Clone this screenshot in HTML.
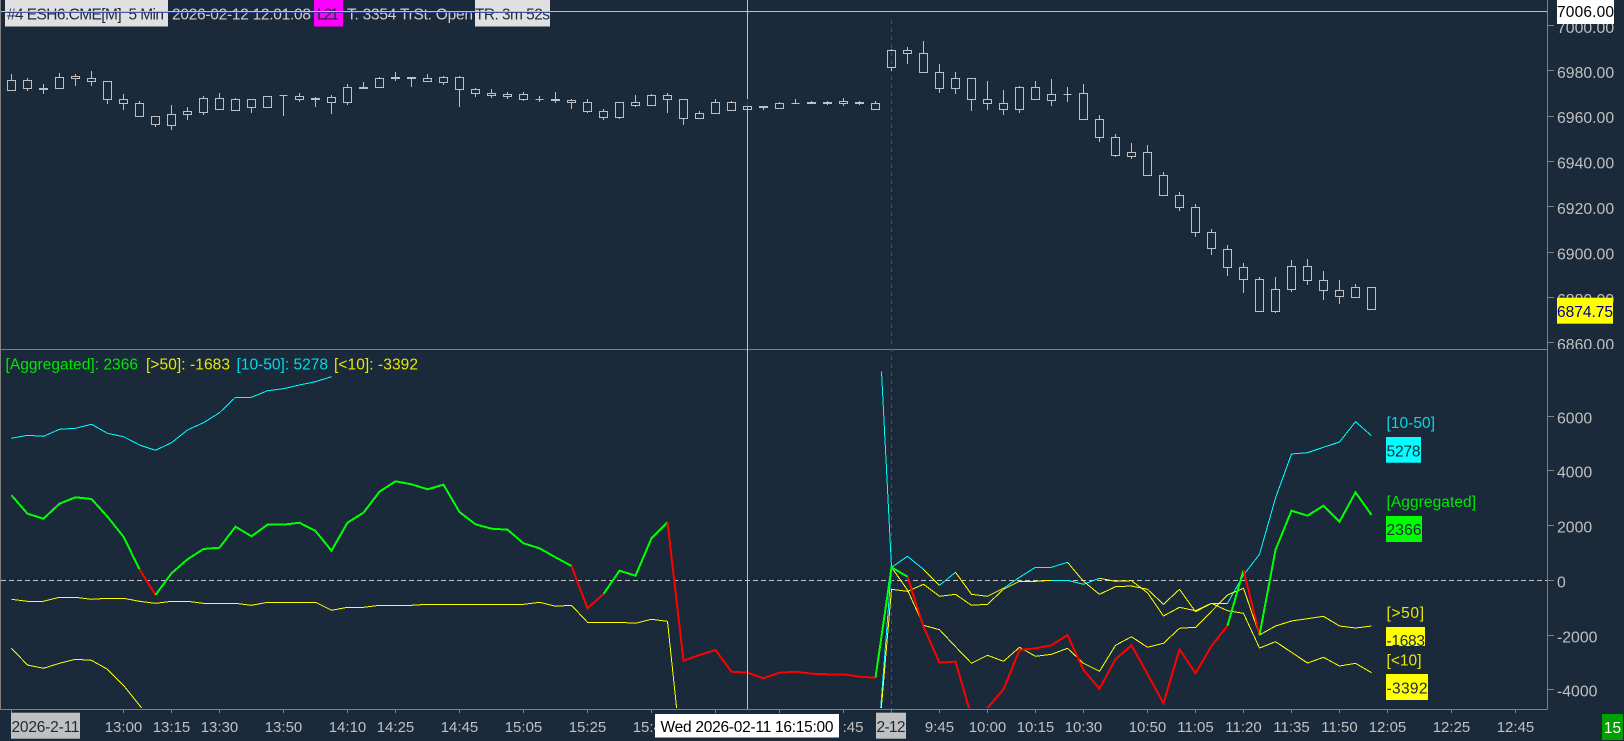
<!DOCTYPE html>
<html>
<head>
<meta charset="utf-8">
<style>
html,body{margin:0;padding:0;background:#1a2a3a;width:1624px;height:741px;overflow:hidden}
svg{display:block;position:absolute;left:0;top:0}
text{font-family:"Liberation Sans",sans-serif;font-size:15.5px;white-space:pre}
.ax text{fill:#c0c0c0;font-size:15.8px}
.tm text{fill:#c0c0c0;font-size:15px;text-anchor:middle}
.l{fill:none;stroke-width:1;shape-rendering:crispEdges}
.t{fill:none;stroke-width:2;shape-rendering:crispEdges}
</style>
</head>
<body>
<svg width="1624" height="741" viewBox="0 0 1624 741" xmlns="http://www.w3.org/2000/svg">
<defs>
<clipPath id="lp"><rect x="1" y="350" width="1546" height="358"/></clipPath>
<clipPath id="ap"><rect x="1550" y="0" width="74" height="349"/></clipPath>
</defs>
<rect width="1624" height="741" fill="#1a2a3a"/>

<!-- header -->
<rect x="5" y="0" width="163" height="26.5" fill="#e0e0e0"/>
<rect x="314" y="0" width="29" height="26.5" fill="#ff00ff"/>
<rect x="475" y="0" width="75" height="26.5" fill="#e0e0e0"/>
<text x="7" y="19.5" fill="#1a2a3a" textLength="157" lengthAdjust="spacing">#4 ESH6.CME[M]  5 Min</text>
<text x="172" y="19.5" fill="#d0d0d0" textLength="139" lengthAdjust="spacing">2026-02-12 12:01:08</text>
<text x="317" y="19.5" fill="#1a2a3a" textLength="22" lengthAdjust="spacing">L21</text>
<text x="347" y="19.5" fill="#d0d0d0" textLength="126" lengthAdjust="spacing">T: 3354 TrSt: Open</text>
<text x="475" y="19.5" fill="#1a2a3a" textLength="75" lengthAdjust="spacing">TR: 3m 52s</text>

<!-- axes -->
<g stroke="#808080" stroke-width="1" shape-rendering="crispEdges" fill="none">
<path d="M0.5 0V709"/>
<path d="M1547.5 0V709.5"/>
<path d="M0 349.5H1547.5"/>
<path d="M0 709.5H1547.5"/>
<path d="M1548 25.5H1554M1548 70.5H1554M1548 116.5H1554M1548 161.5H1554M1548 206.5H1554M1548 252.5H1554M1548 297.5H1554M1548 342.5H1554M1548 416.5H1554M1548 470.5H1554M1548 525.5H1554M1548 580.5H1554M1548 635.5H1554M1548 689.5H1554"/>
<path d="M11.5 710V713M123.5 710V713M171.5 710V713M219.5 710V713M283.5 710V713M347.5 710V713M395.5 710V713M459.5 710V713M523.5 710V713M587.5 710V713M651.5 710V713M715.5 710V713M779.5 710V713M843.5 710V713M891.5 710V713M939.5 710V713M987.5 710V713M1035.5 710V713M1083.5 710V713M1147.5 710V713M1195.5 710V713M1243.5 710V713M1291.5 710V713M1339.5 710V713M1387.5 710V713M1451.5 710V713M1515.5 710V713"/>
</g>

<!-- zero line, session dashed line -->
<path d="M1 580.5H1547" stroke="#c8c8c8" stroke-width="1" stroke-dasharray="5 3" shape-rendering="crispEdges" fill="none"/>
<path d="M891.5 20V709" stroke="#3a4a8c" stroke-width="1" stroke-dasharray="4 4" shape-rendering="crispEdges" fill="none"/>

<!-- candles -->
<path fill="none" stroke="#c0c0c0" stroke-width="1" shape-rendering="crispEdges" d="
M11.5 74V80.5M7.5 80.5H15.5V90.5H7.5Z
M27.5 78V80.5M27.5 88.5V91M23.5 80.5H31.5V88.5H23.5Z
M43.5 84V88.5M43.5 89.5V94M39.5 88.5H47.5V89.5H39.5Z
M59.5 73V77.5M55.5 77.5H63.5V88.5H55.5Z
M75.5 74V76.5M75.5 78.5V86M71.5 76.5H79.5V78.5H71.5Z
M91.5 71V78.5M91.5 81.5V86M87.5 78.5H95.5V81.5H87.5Z
M107.5 99.5V104M103.5 81.5H111.5V99.5H103.5Z
M123.5 94V99.5M123.5 103.5V110M119.5 99.5H127.5V103.5H119.5Z
M139.5 101V103.5M135.5 103.5H143.5V116.5H135.5Z
M155.5 124.5V127M151.5 116.5H159.5V124.5H151.5Z
M171.5 105V114.5M171.5 125.5V130M167.5 114.5H175.5V125.5H167.5Z
M187.5 107V111.5M187.5 114.5V120M183.5 111.5H191.5V114.5H183.5Z
M203.5 96V98.5M203.5 112.5V115M199.5 98.5H207.5V112.5H199.5Z
M219.5 93V98.5M215.5 98.5H223.5V109.5H215.5Z
M235.5 98V99.5M231.5 99.5H239.5V110.5H231.5Z
M251.5 107.5V113M247.5 99.5H255.5V107.5H247.5Z
M263.5 96.5H271.5V107.5H263.5Z
M283.5 95.5V116M279.5 95.5H287.5
M299.5 93V96.5M299.5 99.5V102M295.5 96.5H303.5V99.5H295.5Z
M315.5 97V98.5M315.5 99.5V107M311.5 98.5H319.5V99.5H311.5Z
M331.5 95V97.5M331.5 102.5V114M327.5 97.5H335.5V102.5H327.5Z
M347.5 84V87.5M347.5 102.5V105M343.5 87.5H351.5V102.5H343.5Z
M363.5 82V87.5M359.5 87.5H367.5V88.5H359.5Z
M379.5 77V78.5M375.5 78.5H383.5V87.5H375.5Z
M395.5 72V77.5M395.5 78.5V81M391.5 77.5H399.5V78.5H391.5Z
M411.5 78.5V87M407.5 77.5H415.5V78.5H407.5Z
M427.5 74V78.5M423.5 78.5H431.5V81.5H423.5Z
M443.5 76V77.5M443.5 82.5V85M439.5 77.5H447.5V82.5H439.5Z
M459.5 76V77.5M459.5 89.5V107M455.5 77.5H463.5V89.5H455.5Z
M475.5 88V89.5M475.5 93.5V97M471.5 89.5H479.5V93.5H471.5Z
M491.5 89V93.5M491.5 95.5V98M487.5 93.5H495.5V95.5H487.5Z
M507.5 92V94.5M507.5 96.5V99M503.5 94.5H511.5V96.5H503.5Z
M523.5 92V94.5M523.5 99.5V101M519.5 94.5H527.5V99.5H519.5Z
M539.5 96V102M535.5 99.5H543.5
M555.5 92V99.5M555.5 100.5V103M551.5 99.5H559.5V100.5H551.5Z
M571.5 99V100.5M571.5 102.5V109M567.5 100.5H575.5V102.5H567.5Z
M587.5 99V102.5M587.5 111.5V113M583.5 102.5H591.5V111.5H583.5Z
M603.5 109V111.5M603.5 117.5V120M599.5 111.5H607.5V117.5H599.5Z
M619.5 117.5V119M615.5 102.5H623.5V117.5H615.5Z
M635.5 95V102.5M635.5 105.5V107M631.5 102.5H639.5V105.5H631.5Z
M651.5 94V95.5M647.5 95.5H655.5V105.5H647.5Z
M667.5 93V95.5M667.5 99.5V113M663.5 95.5H671.5V99.5H663.5Z
M683.5 118.5V125M679.5 99.5H687.5V118.5H679.5Z
M699.5 111V113.5M695.5 113.5H703.5V118.5H695.5Z
M715.5 99V102.5M711.5 102.5H719.5V113.5H711.5Z
M731.5 101V102.5M727.5 102.5H735.5V110.5H727.5Z
M747.5 99V106.5M743.5 106.5H751.5V109.5H743.5Z
M763.5 107.5V110M759.5 106.5H767.5V107.5H759.5Z
M779.5 102V103.5M775.5 103.5H783.5V108.5H775.5Z
M795.5 99V103.5M791.5 103.5H799.5
M811.5 101V102.5M811.5 103.5V104M807.5 102.5H815.5V103.5H807.5Z
M827.5 101V102.5M827.5 103.5V105M823.5 102.5H831.5V103.5H823.5Z
M843.5 98V101.5M843.5 103.5V106M839.5 101.5H847.5V103.5H839.5Z
M859.5 101V102.5M859.5 103.5V105M855.5 102.5H863.5V103.5H855.5Z
M875.5 101V103.5M871.5 103.5H879.5V109.5H871.5Z
M891.5 49V50.5M891.5 67.5V71M887.5 50.5H895.5V67.5H887.5Z
M907.5 47V50.5M907.5 53.5V64M903.5 50.5H911.5V53.5H903.5Z
M923.5 41V53.5M919.5 53.5H927.5V72.5H919.5Z
M939.5 64V72.5M939.5 88.5V93M935.5 72.5H943.5V88.5H935.5Z
M955.5 72V78.5M955.5 88.5V94M951.5 78.5H959.5V88.5H951.5Z
M971.5 99.5V111M967.5 78.5H975.5V99.5H967.5Z
M987.5 81V99.5M987.5 103.5V110M983.5 99.5H991.5V103.5H983.5Z
M1003.5 90V103.5M1003.5 109.5V115M999.5 103.5H1007.5V109.5H999.5Z
M1019.5 86V87.5M1019.5 109.5V113M1015.5 87.5H1023.5V109.5H1015.5Z
M1035.5 81V87.5M1031.5 87.5H1039.5V99.5H1031.5Z
M1051.5 79V94.5M1051.5 100.5V106M1047.5 94.5H1055.5V100.5H1047.5Z
M1067.5 87V102M1063.5 94.5H1071.5
M1083.5 84V93.5M1079.5 93.5H1087.5V119.5H1079.5Z
M1099.5 115V119.5M1099.5 137.5V142M1095.5 119.5H1103.5V137.5H1095.5Z
M1115.5 134V137.5M1115.5 155.5V157M1111.5 137.5H1119.5V155.5H1111.5Z
M1131.5 143V152.5M1131.5 156.5V159M1127.5 152.5H1135.5V156.5H1127.5Z
M1147.5 145V152.5M1143.5 152.5H1151.5V175.5H1143.5Z
M1163.5 172V175.5M1159.5 175.5H1167.5V195.5H1159.5Z
M1179.5 192V195.5M1179.5 207.5V211M1175.5 195.5H1183.5V207.5H1175.5Z
M1195.5 204V207.5M1195.5 232.5V237M1191.5 207.5H1199.5V232.5H1191.5Z
M1211.5 229V232.5M1211.5 248.5V255M1207.5 232.5H1215.5V248.5H1207.5Z
M1227.5 245V249.5M1227.5 267.5V276M1223.5 249.5H1231.5V267.5H1223.5Z
M1243.5 263V267.5M1243.5 279.5V293M1239.5 267.5H1247.5V279.5H1239.5Z
M1259.5 277V279.5M1255.5 279.5H1263.5V311.5H1255.5Z
M1275.5 277V289.5M1275.5 311.5V313M1271.5 289.5H1279.5V311.5H1271.5Z
M1291.5 260V266.5M1291.5 289.5V292M1287.5 266.5H1295.5V289.5H1287.5Z
M1307.5 259V266.5M1307.5 280.5V285M1303.5 266.5H1311.5V280.5H1303.5Z
M1323.5 271V280.5M1323.5 290.5V300M1319.5 280.5H1327.5V290.5H1319.5Z
M1339.5 280V290.5M1339.5 296.5V304M1335.5 290.5H1343.5V296.5H1335.5Z
M1355.5 284V287.5M1351.5 287.5H1359.5V297.5H1351.5Z
M1367.5 287.5H1375.5V309.5H1367.5Z"/>

<!-- indicator lines -->
<g clip-path="url(#lp)">
<g class="l" stroke="#00ffff" fill="none">
<polyline class="l" stroke="#00ffff" points="11.5,438.3 27.5,435.3 43.5,436.3 59.5,429.3 75.5,428.3 91.5,424.3 107.5,433.3 123.5,436.7 139.5,445 155.5,450.3 171.5,442.7 187.5,430 203.5,422.7 219.5,412.7 235.5,397.3 251.5,397.3 267.5,390.7 283.5,388.7 299.5,385 315.5,381.7 331.5,376.7"/>
<polyline class="l" stroke="#00ffff" points="881.5,371.5 891.5,567.3"/>
<polyline class="l" stroke="#00ffff" points="880.7,708 891.5,567.3 907.5,556.3 923.5,569.3"/>
<polyline class="l" stroke="#00ffff" points="939.5,585.3 955.5,572.3"/>
<polyline class="l" stroke="#00ffff" points="1003.5,588.3 1019.5,577.3 1035.5,567.3 1051.5,567.3 1067.5,562.3"/>
<polyline class="l" stroke="#00ffff" points="1051.5,580.3 1067.5,580.3 1083.5,584.3 1099.5,578.3"/>
<polyline class="l" stroke="#00ffff" points="1227.5,603.3 1243.5,575 1259.5,554.3 1275.5,498 1291.5,454 1307.5,452.7 1323.5,447.3 1339.5,442 1355.5,421.7 1371.5,435.7"/>
</g>
<g>
<polyline class="l" stroke="#ffff00" points="11.5,599.3 27.5,601.3 43.5,601.3 59.5,597.3 75.5,597.3 91.5,599.3 107.5,598.3 123.5,598.3 139.5,601.3 155.5,603.3 171.5,601.3 187.5,601.3 203.5,603.3 219.5,603.3 235.5,603.3 251.5,605.3 267.5,602.3 283.5,602.3 299.5,602.3 315.5,602.3 331.5,610.3 347.5,607.3 363.5,607.3 379.5,605.3 395.5,605.3 411.5,605.3 427.5,604.3 443.5,604.3 459.5,604.3 475.5,604.3 491.5,604.3 507.5,604.3 523.5,604.3 539.5,602.3 555.5,606.3 571.5,605.3 587.5,622.3 603.5,622.3 619.5,622.3 635.5,623.3 651.5,619.3 667.5,621.3 676.6,708"/>
<polyline class="l" stroke="#ffff00" points="11.5,648.3 27.5,665 43.5,668.3 59.5,663.3 75.5,659.3 91.5,660.3 107.5,669.3 123.5,685.3 139.5,705.3 141.6,708"/>
<polyline class="l" stroke="#ffff00" points="881.3,708 891.5,589.3 907.5,591.3 923.5,584.3 939.5,596.3 955.5,594.3 971.5,605.3 987.5,604.3 1003.5,589.3 1019.5,581.3 1035.5,581.3 1051.5,580.3"/>
<polyline class="l" stroke="#ffff00" points="1099.5,578.3 1115.5,581.3 1131.5,580.7 1147.5,592.7 1163.5,616 1179.5,607.3 1195.5,610.7 1211.5,603.3 1227.5,610.7 1243.5,613.3 1259.5,648 1275.5,641.7 1291.5,652.3 1307.5,663 1323.5,657.3 1339.5,666 1355.5,663.3 1371.5,672.7"/>
<polyline class="l" stroke="#ffff00" points="891.5,567.3 907.5,590 923.5,625.3 939.5,629.7 955.5,646.7 971.5,663.3 987.5,655.3 1003.5,661.3 1019.5,647.3 1035.5,656.3 1051.5,654.3 1067.5,648.3 1083.5,663.3 1099.5,671.3 1115.5,645.3 1131.5,636.7 1147.5,647.3 1163.5,643.3 1179.5,628.3 1195.5,627.3 1211.5,611.3 1227.5,595 1243.5,588.3 1259.5,635 1275.5,626 1291.5,621 1307.5,618.7 1323.5,616.3 1339.5,626 1355.5,628 1371.5,626"/>
<polyline class="l" stroke="#ffff00" points="923.5,569.3 939.5,585.3"/>
<polyline class="l" stroke="#ffff00" points="955.5,572.3 971.5,594.3 987.5,596.3 1003.5,588.3"/>
<polyline class="l" stroke="#ffff00" points="1067.5,562.3 1083.5,581.3 1099.5,594.3 1115.5,586.7 1131.5,586 1147.5,589.3 1163.5,604.3 1179.5,589.3 1195.5,611.7 1211.5,603.3 1227.5,603.3"/>
</g>
<g>
<polyline class="t" stroke="#00ff00" points="11.5,495.3 27.5,513.7 43.5,518.7 59.5,503.7 75.5,497.3 91.5,499 107.5,516.7 123.5,536.7 139.5,569.3"/>
<polyline class="t" stroke="#ff0000" points="139.5,569.3 155.5,595"/>
<polyline class="t" stroke="#00ff00" points="155.5,595 171.5,573.3 187.5,559.3 203.5,549 219.5,547.7 235.5,526.7 251.5,536.3 267.5,524.7 283.5,524.7 299.5,522.7 315.5,531 331.5,550.7 347.5,522.7 363.5,512.7 379.5,491.7 395.5,481.3 411.5,484.3 427.5,489.3 443.5,484.7 459.5,512 475.5,524.3 491.5,528.7 507.5,529.7 523.5,543.3 539.5,548.3 555.5,557.3 571.5,566"/>
<polyline class="t" stroke="#ff0000" points="571.5,566 587.5,608.3 603.5,594"/>
<polyline class="t" stroke="#00ff00" points="603.5,594 619.5,570.7 635.5,575.7 651.5,538.3 667.5,522.3"/>
<polyline class="t" stroke="#ff0000" points="667.5,522.3 683.5,660.7 699.5,655 715.5,650 731.5,671.7 747.5,672.7 763.5,678.3 779.5,672.7 795.5,671.7 811.5,673.7 827.5,674.3 843.5,674.3 859.5,676.7 875.5,677.7"/>
<polyline class="t" stroke="#00ff00" points="875.5,677.7 891.5,567.3 907.5,576.7"/>
<polyline class="t" stroke="#ff0000" points="907.5,576.7 923.5,626.7 939.5,662.7 955.5,661.7 971.5,716.7 987.5,708 1003.5,689.3 1019.5,650 1035.5,648.3 1051.5,645.3 1067.5,635 1083.5,670 1099.5,688.7 1115.5,659.3 1131.5,645.3 1147.5,674 1163.5,703.3 1179.5,649.3 1195.5,673.3 1211.5,646 1227.5,625.7"/>
<polyline class="t" stroke="#00ff00" points="1227.5,625.7 1243.5,570"/>
<polyline class="t" stroke="#ff0000" points="1243.5,570 1259.5,635"/>
<polyline class="t" stroke="#00ff00" points="1259.5,635 1275.5,550 1291.5,510.7 1307.5,515.7 1323.5,505.7 1339.5,521.7 1355.5,492.3 1371.5,515"/>
</g>
</g>

<!-- cursor -->
<path d="M747.5 0V709" stroke="#d4d42c" stroke-width="1" shape-rendering="crispEdges"/>
<path d="M747.5 99V106" stroke="#2030c0" stroke-width="1" shape-rendering="crispEdges"/>
<path d="M1 11.5H1547" stroke="#d4d42c" stroke-width="1" shape-rendering="crispEdges"/>
<path d="M5 12.5H550" stroke="#2a3aa0" stroke-width="1" shape-rendering="crispEdges" opacity=".8"/>

<!-- legend -->
<text x="5.5" y="369.5" fill="#00e800" textLength="132.5" lengthAdjust="spacing">[Aggregated]: 2366</text>
<text x="146" y="369.5" fill="#e8e800" textLength="84" lengthAdjust="spacing">[&gt;50]: -1683</text>
<text x="236.5" y="369.5" fill="#00dce8" textLength="91.5" lengthAdjust="spacing">[10-50]: 5278</text>
<text x="334" y="369.5" fill="#e8e800" textLength="84" lengthAdjust="spacing">[&lt;10]: -3392</text>

<!-- price axis labels -->
<g class="ax" clip-path="url(#ap)">
<text x="1557" y="33">7000.00</text>
<text x="1557" y="78">6980.00</text>
<text x="1557" y="123">6960.00</text>
<text x="1557" y="168.7">6940.00</text>
<text x="1557" y="214">6920.00</text>
<text x="1557" y="259.7">6900.00</text>
<text x="1557" y="304.8">6880.00</text>
<text x="1557" y="350">6860.00</text>
</g>
<g class="ax">
<text x="1557" y="423.7">6000</text>
<text x="1557" y="477.3">4000</text>
<text x="1557" y="532.7">2000</text>
<text x="1557" y="587.3">0</text>
<text x="1557" y="642.7">-2000</text>
<text x="1557" y="696.7">-4000</text>
</g>
<rect x="1557" y="0" width="57" height="24" fill="#ffffff"/>
<text x="1557" y="17.2" fill="#000000" textLength="57" lengthAdjust="spacing">7006.00</text>
<rect x="1557" y="297.7" width="56" height="26" fill="#ffff00"/>
<text x="1557" y="317" fill="#000080" textLength="56" lengthAdjust="spacing">6874.75</text>

<!-- right labels -->
<text x="1386.5" y="428" fill="#00dce8" textLength="48.5" lengthAdjust="spacing">[10-50]</text>
<rect x="1386" y="437" width="35" height="25.7" fill="#00ffff"/>
<text x="1386.5" y="456.5" fill="#1a2a3a" textLength="34" lengthAdjust="spacing">5278</text>
<text x="1386.5" y="507" fill="#00e800" textLength="89.5" lengthAdjust="spacing">[Aggregated]</text>
<rect x="1386" y="516" width="36" height="26" fill="#00ff00"/>
<text x="1386.5" y="535" fill="#1a2a3a" textLength="35" lengthAdjust="spacing">2366</text>
<text x="1386.5" y="618" fill="#e8e800" textLength="37.5" lengthAdjust="spacing">[&gt;50]</text>
<rect x="1386" y="627" width="39" height="26" fill="#ffff00"/>
<text x="1386.5" y="646" fill="#1a2a3a" textLength="38.5" lengthAdjust="spacing">-1683</text>
<rect x="1386" y="646" width="40" height="28" fill="#1a2a3a"/>
<text x="1386.5" y="665.5" fill="#e8e800" textLength="35" lengthAdjust="spacing">[&lt;10]</text>
<rect x="1386" y="674" width="42" height="26" fill="#ffff00"/>
<text x="1386.5" y="693.5" fill="#1a2a3a" textLength="41" lengthAdjust="spacing">-3392</text>

<!-- time labels -->
<g class="tm">
<text x="123.5" y="732">13:00</text>
<text x="171.5" y="732">13:15</text>
<text x="219.5" y="732">13:30</text>
<text x="283.5" y="732">13:50</text>
<text x="347.5" y="732">14:10</text>
<text x="395.5" y="732">14:25</text>
<text x="459.5" y="732">14:45</text>
<text x="523.5" y="732">15:05</text>
<text x="587.5" y="732">15:25</text>
<text x="651.5" y="732">15:45</text>
<text x="853" y="732">:45</text>
<text x="939.5" y="732">9:45</text>
<text x="987.5" y="732">10:00</text>
<text x="1035.5" y="732">10:15</text>
<text x="1083.5" y="732">10:30</text>
<text x="1147.5" y="732">10:50</text>
<text x="1195.5" y="732">11:05</text>
<text x="1243.5" y="732">11:20</text>
<text x="1291.5" y="732">11:35</text>
<text x="1339.5" y="732">11:50</text>
<text x="1387.5" y="732">12:05</text>
<text x="1451.5" y="732">12:25</text>
<text x="1515.5" y="732">12:45</text>
</g>
<rect x="11" y="712.7" width="69" height="26" fill="#c0c0c0"/>
<text x="11.5" y="732" fill="#1a2a3a" textLength="68" lengthAdjust="spacing">2026-2-11</text>
<rect x="876" y="712.7" width="30" height="26" fill="#c0c0c0"/>
<text x="876.5" y="732" fill="#1a2a3a" textLength="29" lengthAdjust="spacing">2-12</text>
<rect x="655" y="714" width="184" height="23.5" fill="#ffffff"/>
<text x="660.5" y="732" fill="#000000" textLength="173" lengthAdjust="spacing">Wed 2026-02-11 16:15:00</text>
<rect x="1602" y="714" width="21" height="26" fill="#00a000"/>
<text x="1612.5" y="733" fill="#ffffff" text-anchor="middle">15</text>
</svg>
</body>
</html>
